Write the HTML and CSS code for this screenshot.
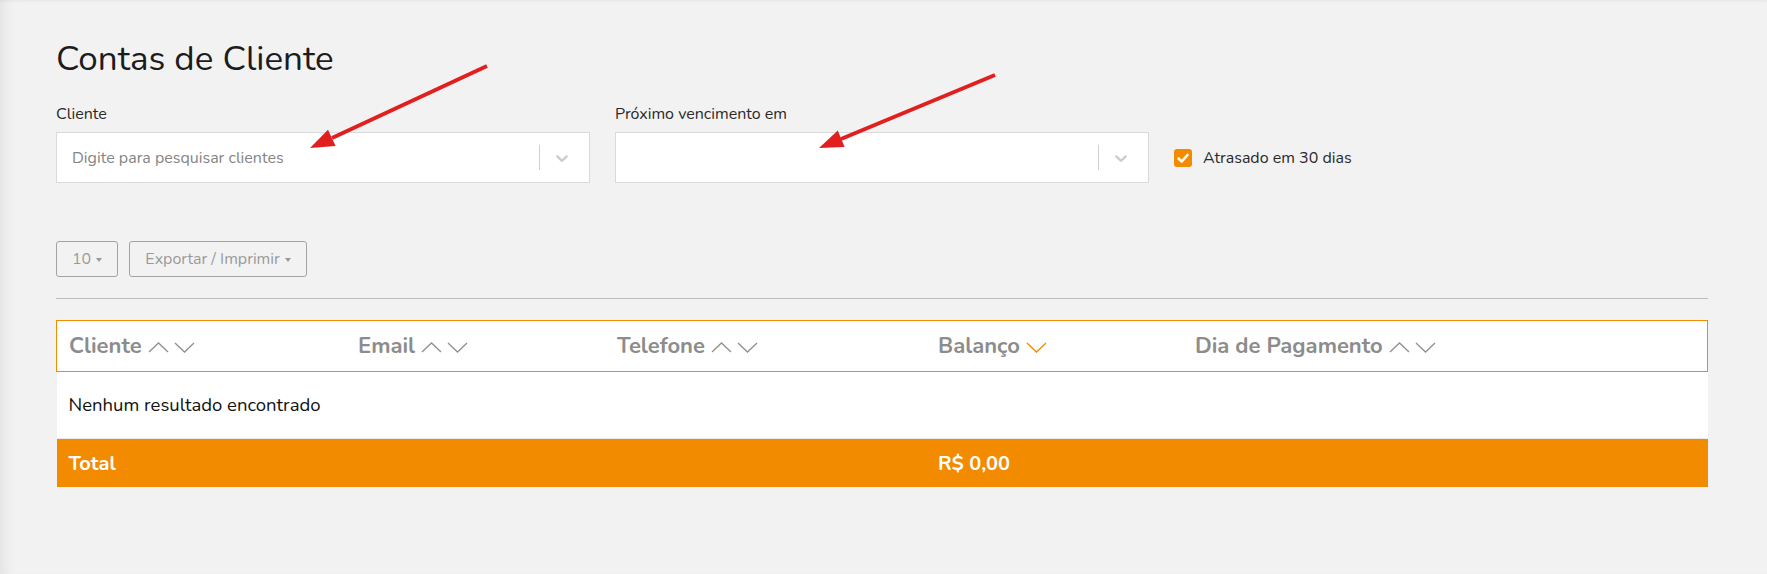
FILE: index.html
```html
<!DOCTYPE html>
<html>
<head>
    <link rel="stylesheet" href="styles.css">
</head>
<body>
  <div class="page">
    <h1 class="title">Contas de Cliente</h1>

    <div class="filters">
      <div class="field">
        <label class="field-label">Cliente</label>
        <div class="select">
          <span class="select-placeholder">Digite para pesquisar clientes</span>
          <span class="select-sep"></span>
          <svg class="select-chevron" viewBox="0 0 20 20" width="20" height="20"><path d="M4.516 7.548c0.436-0.446 1.043-0.481 1.576 0l3.908 3.747 3.908-3.747c0.533-0.481 1.141-0.446 1.574 0 0.436 0.445 0.408 1.197 0 1.615-0.406 0.418-4.695 4.502-4.695 4.502-0.217 0.223-0.502 0.335-0.787 0.335s-0.57-0.112-0.789-0.335c0 0-4.287-4.084-4.695-4.502s-0.436-1.17 0-1.615z"/></svg>
        </div>
      </div>
      <div class="field">
        <label class="field-label">Próximo vencimento em</label>
        <div class="select">
          <span class="select-placeholder"></span>
          <span class="select-sep"></span>
          <svg class="select-chevron" viewBox="0 0 20 20" width="20" height="20"><path d="M4.516 7.548c0.436-0.446 1.043-0.481 1.576 0l3.908 3.747 3.908-3.747c0.533-0.481 1.141-0.446 1.574 0 0.436 0.445 0.408 1.197 0 1.615-0.406 0.418-4.695 4.502-4.695 4.502-0.217 0.223-0.502 0.335-0.787 0.335s-0.57-0.112-0.789-0.335c0 0-4.287-4.084-4.695-4.502s-0.436-1.17 0-1.615z"/></svg>
        </div>
      </div>
      <label class="check">
        <span class="check-box">
          <svg viewBox="0 0 18 18" width="18" height="18"><polyline points="4.5,9.5 7.8,12.5 13.5,6" fill="none" stroke="#fff" stroke-width="2.6" stroke-linecap="round" stroke-linejoin="round"/></svg>
        </span>
        Atrasado em 30 dias
      </label>
    </div>

    <div class="toolbar">
      <button class="btn">10 <span class="caret"></span></button>
      <button class="btn">Exportar / Imprimir <span class="caret"></span></button>
    </div>
    <hr class="divider">

    <table class="grid">
      <thead>
        <tr>
          <th class="col-cliente">Cliente <svg class="sort" viewBox="0 0 48 12" width="48" height="12"><polyline points="1,11 10.5,2 20,11"/><polyline points="27,2 36.5,11 46,2"/></svg></th>
          <th class="col-email">Email <svg class="sort" viewBox="0 0 48 12" width="48" height="12"><polyline points="1,11 10.5,2 20,11"/><polyline points="27,2 36.5,11 46,2"/></svg></th>
          <th class="col-tel">Telefone <svg class="sort" viewBox="0 0 48 12" width="48" height="12"><polyline points="1,11 10.5,2 20,11"/><polyline points="27,2 36.5,11 46,2"/></svg></th>
          <th class="col-bal">Balanço <svg class="sort active" viewBox="0 0 22 12" width="22" height="12"><polyline points="1,2 10.5,11 20,2"/></svg></th>
          <th class="col-dia">Dia de Pagamento <svg class="sort" viewBox="0 0 48 12" width="48" height="12"><polyline points="1,11 10.5,2 20,11"/><polyline points="27,2 36.5,11 46,2"/></svg></th>
        </tr>
      </thead>
      <tbody>
        <tr class="empty-row">
          <td colspan="5">Nenhum resultado encontrado</td>
        </tr>
      </tbody>
      <tfoot>
        <tr>
          <td>Total</td>
          <td></td>
          <td></td>
          <td>R$ 0,00</td>
          <td></td>
        </tr>
      </tfoot>
    </table>
  </div>

  <!-- annotation arrows drawn over the screenshot -->
  <svg class="marks" width="1767" height="574" viewBox="0 0 1767 574">
    <line x1="487" y1="66" x2="332" y2="138" />
    <polygon points="310,148 335.6,146.1 328,129.7" />
    <line x1="995" y1="75" x2="841" y2="139" />
    <polygon points="819,148 844.6,147.1 837.8,130.5" />
  </svg>
</body>
</html>
```

FILE: styles.css
```css
/* page base */
html, body {
    margin: 0;
    height: 100%;
}

body {
    background-color: #f2f2f2;
    font-family: "Nunito", Lato, "Noto Sans", sans-serif;
    color: #222;
    position: relative;
    box-shadow: inset 14px 0 14px -10px rgba(0, 0, 0, 0.07), inset 0 3px 3px -2px rgba(0, 0, 0, 0.05);
    overflow: hidden;
}

.page {
    padding: 39px 59px 0 56px;
}

.title {
    margin: 0;
    font-size: 35px;
    line-height: 40px;
    font-weight: 400;
    color: #1c1c1c;
}

/* filter row */
.filters {
    display: flex;
    align-items: flex-end;
    gap: 25px;
    margin-top: 25px;
}

.field {
    width: 534px;
}

.field-label {
    display: block;
    font-size: 16px;
    line-height: 20px;
    margin-bottom: 8px;
    color: #2a2a2a;
}

.select {
    display: flex;
    align-items: center;
    height: 49px;
    background: #fff;
    border: 1px solid #dadada;
}

.select-placeholder {
    flex: 1;
    padding-left: 15px;
    font-size: 16px;
    color: #858585;
}

.select-sep {
    width: 1px;
    height: 25px;
    background: #d0d0d0;
}

.select-chevron {
    fill: #cccccc;
    margin: 0 17px 0 12px;
}

.check {
    display: flex;
    align-items: center;
    gap: 11px;
    height: 51px;
    font-size: 16px;
    color: #2a2a2a;
}

.check-box {
    display: flex;
    width: 18px;
    height: 18px;
    border-radius: 3px;
    background: #f38b00;
}

/* toolbar */
.toolbar {
    display: flex;
    gap: 11px;
    margin-top: 58px;
}

.btn {
    height: 36px;
    padding: 0 15px;
    background: transparent;
    border: 1px solid #a3a3a3;
    border-radius: 3px;
    font-family: inherit;
    font-size: 16px;
    color: #9a9a9a;
}

.caret {
    display: inline-block;
    vertical-align: middle;
    margin-left: 1px;
    border-top: 4px solid #9a9a9a;
    border-left: 3.5px solid transparent;
    border-right: 3.5px solid transparent;
}

.divider {
    margin: 21px 0 0 0;
    border: 0;
    border-top: 1px solid #bdbdbd;
}

/* table */
.grid {
    width: 100%;
    margin-top: 21px;
    border-collapse: collapse;
    table-layout: fixed;
}

.col-cliente { width: 277px; }
.col-email { width: 247px; }
.col-tel { width: 309px; }
.col-bal { width: 245px; }

.grid th {
    height: 50px;
    padding: 0 0 0 12px;
    text-align: left;
    background: #fff;
    font-size: 22px;
    font-weight: 700;
    color: #8c8c8c;
    border-top: 1px solid #f38b00;
    border-bottom: 1px solid #f38b00;
    white-space: nowrap;
}

.grid th:first-child {
    border-left: 1px solid #f38b00;
}

.grid th:last-child {
    border-right: 1px solid #f38b00;
}

.sort {
    fill: none;
    stroke: #8f8f8f;
    stroke-width: 1.3;
    vertical-align: 0;
    margin-left: 0;
}

.sort.active {
    stroke: #f38b00;
}

.empty-row td {
    height: 66px;
    padding: 0 0 0 12px;
    background: #fff;
    font-size: 18.5px;
    color: #111;
    border-bottom: 1px solid #ececec;
}

.grid tfoot td {
    height: 48px;
    padding: 0 0 0 12px;
    background: #f38b00;
    color: #fff;
    font-size: 20px;
    font-weight: 700;
}

/* red annotation arrows over the page */
.marks {
    position: absolute;
    left: 0;
    top: 0;
    pointer-events: none;
}

.marks line {
    stroke: #e21f1f;
    stroke-width: 4;
}

.marks polygon {
    fill: #e21f1f;
}
```
